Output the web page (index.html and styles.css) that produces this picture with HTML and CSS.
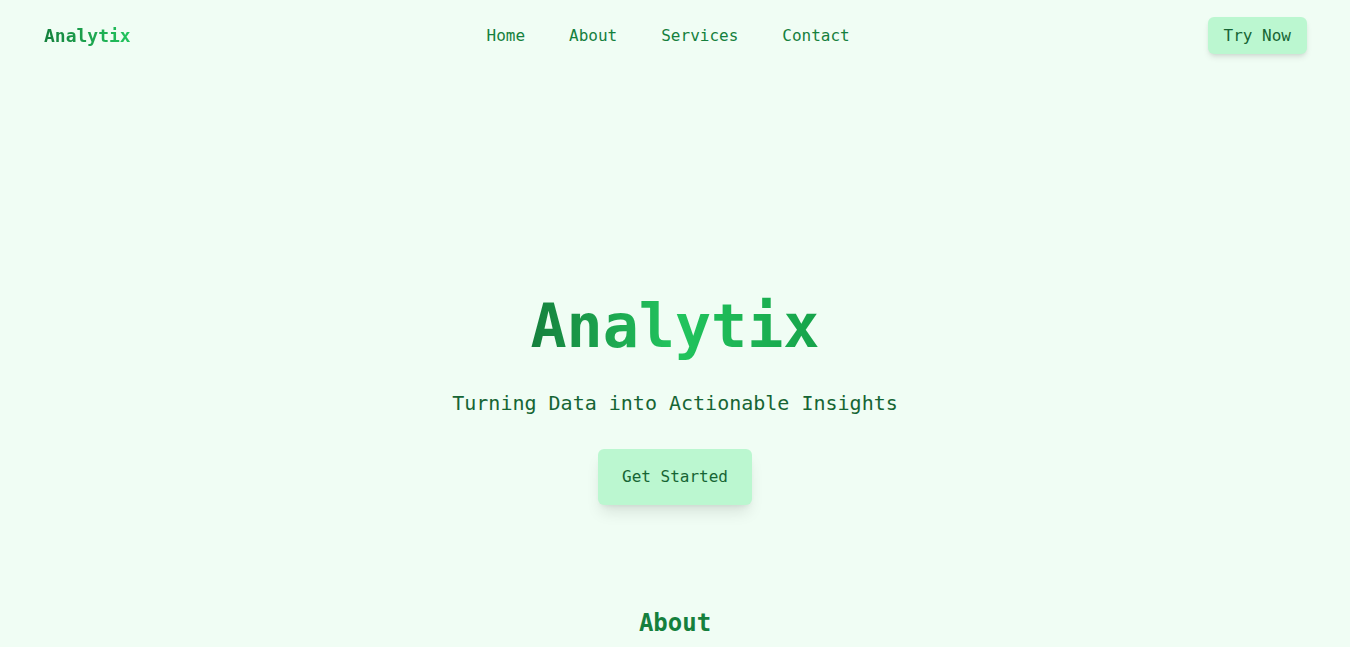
FILE: index.html
```html
<!DOCTYPE html>
<html lang="en">
<head>
<meta charset="utf-8">
<title>Analytix</title>
<link rel="stylesheet" href="styles.css">
</head>
<body>
<header class="site-header">
  <a class="logo" href="#">Analytix</a>
  <nav class="main-nav">
    <ul class="nav-list">
      <li><a href="#">Home</a></li>
      <li><a href="#">About</a></li>
      <li><a href="#">Services</a></li>
      <li><a href="#">Contact</a></li>
    </ul>
  </nav>
  <a class="btn btn-small" href="#">Try Now</a>
</header>
<main>
  <section class="hero">
    <h1 class="hero-title">Analytix</h1>
    <p class="hero-sub">Turning Data into Actionable Insights</p>
    <a class="btn btn-large" href="#">Get Started</a>
  </section>
  <section class="about">
    <h2 class="section-title">About</h2>
  </section>
</main>
</body>
</html>
```
FILE: styles.css
```css
* { box-sizing: border-box; }
html, body {
  margin: 0;
  padding: 0;
  background: #f0fdf4;
  font-family: "DejaVu Sans Mono", "Liberation Mono", monospace;
  color: #166534;
  overflow: hidden;
}
a { text-decoration: none; }

.site-header {
  display: flex;
  align-items: center;
  justify-content: space-between;
  height: 71px;
  padding: 0 43px 0 44px;
}
.logo {
  font-size: 18px;
  font-weight: bold;
  background: linear-gradient(90deg, #15803d, #22c55e);
  -webkit-background-clip: text;
  background-clip: text;
  color: transparent;
  line-height: 24px;
}
.nav-list {
  display: flex;
  gap: 44px;
  list-style: none;
  margin: 0;
  padding: 0 40px 0 38px;
}
.nav-list a {
  font-size: 16px;
  line-height: 24px;
  color: #15803d;
}
.btn {
  display: inline-block;
  background: #bbf7d0;
  color: #166534;
  font-size: 16px;
  line-height: 21px;
}
.btn-small {
  padding: 8px 16px;
  border-radius: 6px;
  box-shadow: 0 4px 6px -1px rgba(0,0,0,0.1), 0 2px 4px -2px rgba(0,0,0,0.1);
}
.btn-large {
  padding: 16px 24px;
  line-height: 24px;
  border-radius: 6px;
  box-shadow: 0 10px 15px -3px rgba(0,0,0,0.1), 0 4px 6px -4px rgba(0,0,0,0.1);
}

.hero {
  display: flex;
  flex-direction: column;
  align-items: center;
  padding: 219px 0 36px;
  text-align: center;
}
.hero-title {
  margin: 0 0 27px;
  font-size: 60px;
  line-height: 72px;
  font-weight: bold;
  background: linear-gradient(90deg, #15803d, #22c55e 50%, #16a34a);
  -webkit-background-clip: text;
  background-clip: text;
  color: transparent;
}
.hero-sub {
  margin: 0 0 32px;
  font-size: 20px;
  line-height: 28px;
  color: #166534;
}

.about {
  padding: 66px 44px 64px;
  text-align: center;
}
.section-title {
  margin: 0;
  font-size: 24px;
  line-height: 32px;
  font-weight: bold;
  color: #15803d;
}
```
